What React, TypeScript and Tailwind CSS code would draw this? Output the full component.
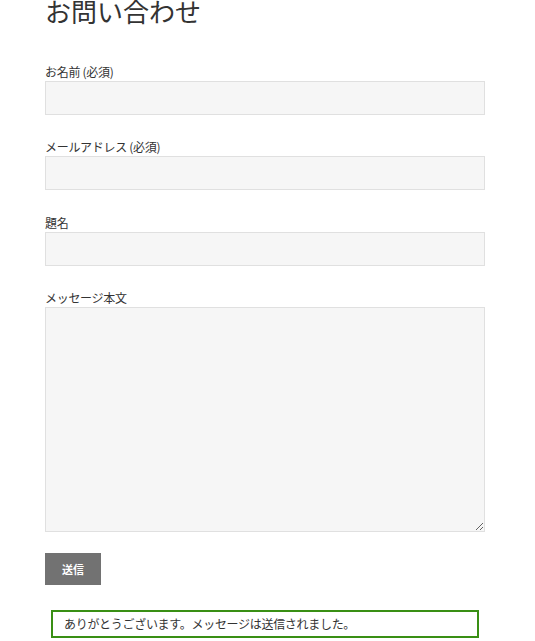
import React from "react";

// ── Field ────────────────────────────────────────────────────────────────────

function Field({
  label,
  required,
  className,
  children,
}: {
  label: string;
  required?: boolean;
  className?: string;
  children: React.ReactNode;
}) {
  return (
    <div className={`flex flex-col ${className ?? ""}`}>
      <label className="block text-[12px] leading-[19px] text-[#333] tracking-[-0.3px]">
        {label}
        {required && " (必須)"}
      </label>
      {children}
    </div>
  );
}

const inputCls =
  "block w-full h-[34px] border border-[#e0e0e0] bg-[#f6f6f6] px-2 text-[13px] outline-none";

// ── App ──────────────────────────────────────────────────────────────────────

export default function App() {
  return (
    <div
      className="min-h-[641px] bg-white text-[#333]"
      style={{ fontFamily: '"Noto Sans CJK JP", "Liberation Sans", sans-serif' }}
    >
      <div className="ml-[45px] w-[440px]">
        <h1 className="text-[26px] leading-[22px] font-normal text-[#333]">
          お問い合わせ
        </h1>

        <form className="mt-[40px] flex flex-col">
          <Field label="お名前" required>
            <input type="text" className={inputCls} />
          </Field>
          <Field label="メールアドレス" required className="mt-[22px]">
            <input type="email" className={inputCls} />
          </Field>
          <Field label="題名" className="mt-[23px]">
            <input type="text" className={inputCls} />
          </Field>
          <Field label="メッセージ本文" className="mt-[22px]">
            <textarea className="block w-full h-[225px] border border-[#e0e0e0] bg-[#f6f6f6] px-2 py-1 text-[13px] outline-none" />
          </Field>
        </form>

        <button
          type="button"
          className="mt-[21px] block w-[56px] h-[32px] bg-[#727272] text-white text-[11px] font-bold"
        >
          送信
        </button>

        <div className="mt-[25px] mx-[6px] h-[28px] border-2 border-[#398f14] pl-[11px] flex items-center text-[12px] text-[#333] tracking-[-0.3px]">
          ありがとうございます。メッセージは送信されました。
        </div>
      </div>
    </div>
  );
}
